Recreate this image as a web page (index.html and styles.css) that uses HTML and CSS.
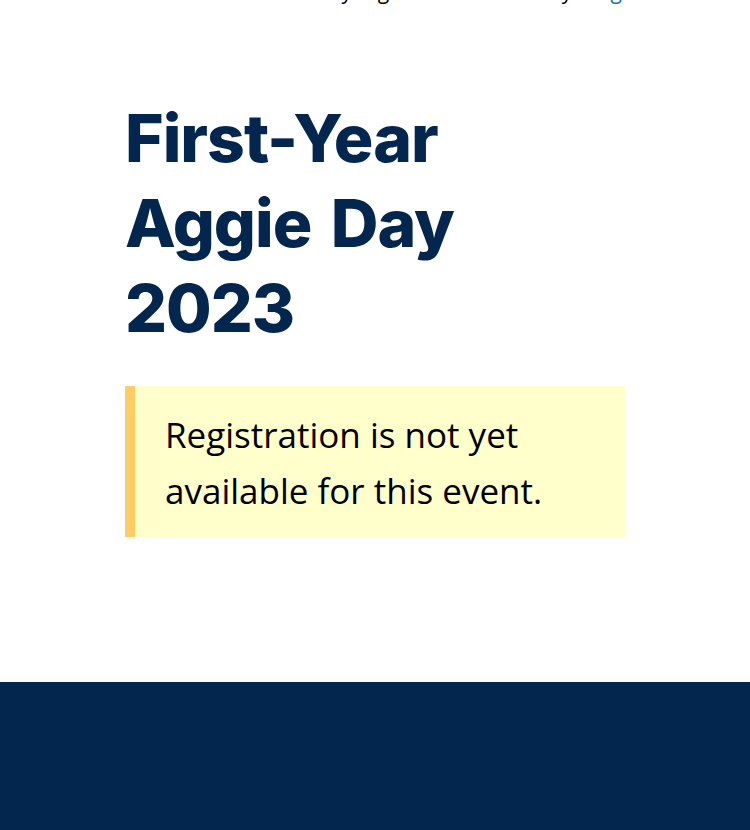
FILE: index.html
```html
<!DOCTYPE html>
<html lang="en">
<head>
<meta charset="utf-8">
<title>First-Year Aggie Day 2023</title>
<link rel="stylesheet" href="styles.css">
</head>
<body>
<div class="topline"><span class="topline-text">Already registered for this day? <a href="#">Login</a></span></div>
<main class="content">
  <h1 class="title">First-Year Aggie Day 2023</h1>
  <div class="notice">Registration is not yet available for this event.</div>
</main>
<footer class="footer"></footer>
</body>
</html>
```
FILE: styles.css
```css
html, body {
  margin: 0;
  padding: 0;
  background: #fff;
}
body {
  font-family: "Open Sans", Lato, sans-serif;
  color: #000;
}
.topline {
  height: 26px;
  margin-top: -22px;
  padding-left: 278px;
  font-size: 21px;
  line-height: 26px;
  white-space: nowrap;
  overflow: hidden;
}
.topline a {
  color: #1f6fb2;
  text-decoration: none;
}
.content {
  width: 500px;
  margin: 0 auto;
  padding-top: 92px;
  padding-bottom: 145px;
}
.title {
  margin: 0;
  font-family: Inter, sans-serif;
  font-weight: 800;
  font-size: 66px;
  line-height: 85px;
  color: #03264f;
  width: 400px;
  letter-spacing: -1px;
  word-spacing: 6px;
}
.notice {
  margin-top: 35px;
  background: #ffffcc;
  border-left: 10px solid #ffcc66;
  padding: 21px 40px 18px 30px;
  font-size: 35px;
  line-height: 56px;
}
.footer {
  background: #03264f;
  height: 150px;
}
```
